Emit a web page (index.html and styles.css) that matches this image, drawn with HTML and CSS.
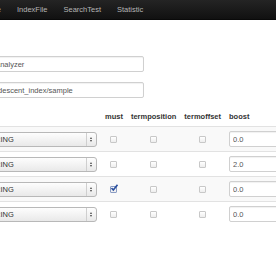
FILE: index.html
```html
<!DOCTYPE html>
<html lang="en">
<head>
    <meta charset="UTF-8">
    <title>Index Analyzer</title>
    <link rel="stylesheet" href="styles.css">
</head>
<body>
    <div class="navbar">
        <ul class="nav">
            <li><a href="#">Home</a></li>
            <li><a href="#">IndexFile</a></li>
            <li><a href="#">SearchTest</a></li>
            <li><a href="#">Statistic</a></li>
        </ul>
    </div>

    <div class="content">
        <div class="form-fields">
            <input class="text-input" type="text" value="analyzer">
            <input class="text-input" type="text" value="/descent_index/sample">
        </div>

        <table class="query-table">
            <thead>
                <tr>
                    <th></th>
                    <th class="center">must</th>
                    <th class="center">termposition</th>
                    <th class="center">termoffset</th>
                    <th>boost</th>
                </tr>
            </thead>
            <tbody>
                <tr>
                    <td><div class="fake-select">STRING<span class="arrows"></span></div></td>
                    <td class="center"><span class="check"></span></td>
                    <td class="center"><span class="check"></span></td>
                    <td class="center"><span class="check"></span></td>
                    <td><input class="boost-input" type="text" value="0.0"></td>
                </tr>
                <tr>
                    <td><div class="fake-select">STRING<span class="arrows"></span></div></td>
                    <td class="center"><span class="check"></span></td>
                    <td class="center"><span class="check"></span></td>
                    <td class="center"><span class="check"></span></td>
                    <td><input class="boost-input" type="text" value="2.0"></td>
                </tr>
                <tr>
                    <td><div class="fake-select">STRING<span class="arrows"></span></div></td>
                    <td class="center">
                        <span class="check checked">
                            <svg width="8" height="8" viewBox="0 0 8 8"><path d="M1.5 4 L3.3 6 L7.5 0.8" fill="none" stroke="#2a4f9e" stroke-width="1.6"/></svg>
                        </span>
                    </td>
                    <td class="center"><span class="check"></span></td>
                    <td class="center"><span class="check"></span></td>
                    <td><input class="boost-input" type="text" value="0.0"></td>
                </tr>
                <tr>
                    <td><div class="fake-select">STRING<span class="arrows"></span></div></td>
                    <td class="center"><span class="check"></span></td>
                    <td class="center"><span class="check"></span></td>
                    <td class="center"><span class="check"></span></td>
                    <td><input class="boost-input" type="text" value="0.0"></td>
                </tr>
            </tbody>
        </table>
    </div>
</body>
</html>
```

FILE: styles.css
```css
body {
    margin: 0;
    font-family: "Liberation Sans", Arial, sans-serif;
    font-size: 7.5px;
    color: #333;
    background: #fff;
    overflow: hidden;
}

.navbar {
    height: 19px;
    background: linear-gradient(#242424, #111);
    border-bottom: 1px solid #0a0a0a;
}

.nav {
    display: flex;
    list-style: none;
    margin: 0 0 0 -27px;
    padding: 0;
}

.nav a,
.nav a:visited {
    display: block;
    padding: 0 8px;
    line-height: 19px;
    color: #b5b5b5;
    text-decoration: none;
}

.content {
    margin-left: -25px;
}

.form-fields {
    display: flex;
    flex-direction: column;
    gap: 10px;
    padding: 36px 0 0 17px;
}

.text-input {
    width: 152px;
    height: 16px;
    box-sizing: border-box;
    padding: 0 3px;
    border: 1px solid #d0d0d0;
    border-radius: 2px;
    box-shadow: inset 0 1px 1px rgba(0, 0, 0, 0.06);
    font-family: inherit;
    font-size: 7.5px;
    color: #555;
}

.query-table {
    border-collapse: collapse;
    margin: 10px 0 0 2px;
}

.query-table th {
    padding: 4px 4px;
    line-height: 10px;
    font-weight: bold;
    text-align: left;
    color: #333;
}

.query-table td {
    padding: 4px 4px;
    border-top: 1px solid #e2e2e2;
    vertical-align: middle;
}

.query-table tbody tr:nth-child(odd) td {
    background: #f9f9f9;
}

.query-table .center {
    text-align: center;
}

.fake-select {
    position: relative;
    width: 116px;
    height: 15px;
    box-sizing: border-box;
    padding-left: 3.5px;
    line-height: 13px;
    border: 1px solid #b8b8b8;
    border-radius: 3px;
    background: linear-gradient(#fdfdfd, #e9e9e9);
    color: #333;
}

.arrows {
    position: absolute;
    right: 0;
    top: 0;
    width: 9px;
    height: 13px;
    border-left: 1px solid #cfcfcf;
}

.arrows::before,
.arrows::after {
    content: "";
    position: absolute;
    left: 3px;
    border-left: 1.5px solid transparent;
    border-right: 1.5px solid transparent;
}

.arrows::before {
    top: 4px;
    border-bottom: 2px solid #444;
}

.arrows::after {
    top: 7px;
    border-top: 2px solid #444;
}

.check {
    display: inline-block;
    position: relative;
    width: 5px;
    height: 5px;
    border: 1px solid #c8c8c8;
    border-radius: 1px;
    background: linear-gradient(#fff, #eee);
    vertical-align: middle;
}

.check svg {
    position: absolute;
    left: -1px;
    top: -3px;
}

.check.checked {
    border-color: #8a9cc4;
}

.boost-input {
    width: 60px;
    height: 16px;
    box-sizing: border-box;
    padding: 0 3px;
    border: 1px solid #d0d0d0;
    border-radius: 2px;
    box-shadow: inset 0 1px 1px rgba(0, 0, 0, 0.06);
    font-family: inherit;
    font-size: 7.5px;
    color: #555;
}
```
